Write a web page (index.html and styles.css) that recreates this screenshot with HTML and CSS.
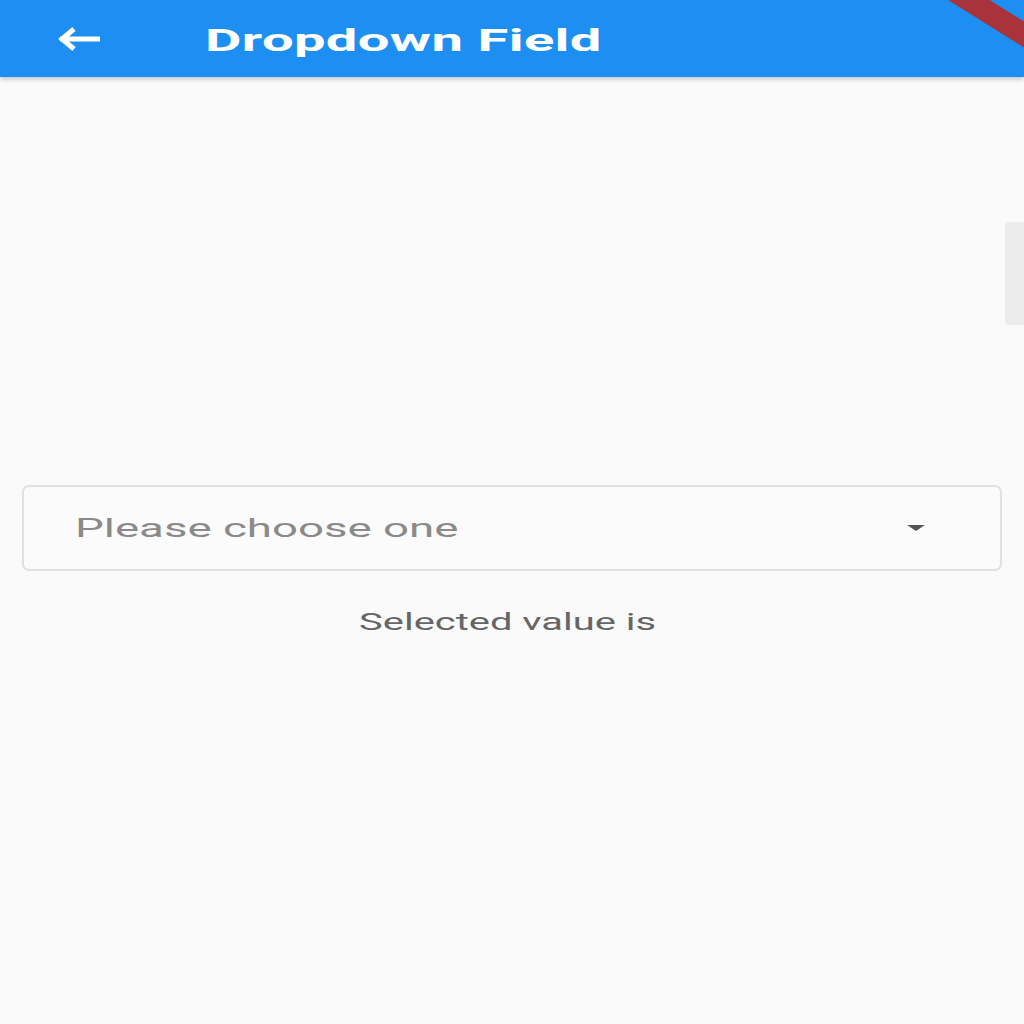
FILE: index.html
```html
<!DOCTYPE html>
<html>
<head>
<meta charset="utf-8">
<link rel="stylesheet" href="styles.css">
</head>
<body>
<div class="app">
  <header class="appbar">
    <svg class="back" viewBox="0 0 44 24" width="44" height="24">
      <path d="M2 12 H42 M16 2 L4 12 L16 22" fill="none" stroke="#fff" stroke-width="5" stroke-linejoin="miter"/>
    </svg>
    <span class="title">Dropdown Field</span>
  </header>
  <main class="content">
    <div class="dropdown">
      <span class="placeholder">Please choose one</span>
      <span class="caret"></span>
    </div>
    <div class="selected"><span class="selected-text">Selected value is</span></div>
  </main>
  <div class="scrollthumb"></div>
  <div class="banner"></div>
</div>
</body>
</html>
```
FILE: styles.css
```css
html, body {
  margin: 0;
  padding: 0;
  background: #fafafa;
}
.app {
  position: relative;
  width: 1024px;
  height: 1024px;
  overflow: hidden;
  background: #fafafa;
  font-family: Roboto, "Liberation Sans", sans-serif;
}
.appbar {
  height: 77px;
  box-sizing: border-box;
  padding-top: 4px;
  background: #1e8ff2;
  display: flex;
  align-items: center;
  box-shadow: 0 2px 5px rgba(0,0,0,0.22);
  position: relative;
  z-index: 1;
}
.back {
  margin-left: 58px;
  margin-top: -4px;
}
.title {
  margin-left: 103px;
  color: #fff;
  font-weight: 700;
  font-size: 31px;
  display: inline-block;
  transform: scaleX(1.81);
  transform-origin: left center;
  letter-spacing: 0.2px;
}
.content {
  padding-top: 408px;
  display: flex;
  flex-direction: column;
  align-items: center;
}
.dropdown {
  width: 980px;
  height: 86px;
  box-sizing: border-box;
  border: 2px solid #e0e0e0;
  border-radius: 7px;
  display: flex;
  align-items: center;
  padding-left: 51px;
  padding-right: 75px;
  background: #fbfbfb;
}
.placeholder {
  flex: 1;
  color: #8a8a8a;
  font-size: 26px;
  display: inline-block;
  transform: scaleX(1.755);
  transform-origin: left center;
}
.caret {
  width: 0;
  height: 0;
  border-left: 9px solid transparent;
  border-right: 9px solid transparent;
  border-top: 6px solid #555;
}
.selected {
  margin-top: 38px;
  width: 100%;
  box-sizing: border-box;
  padding-right: 8px;
  display: flex;
  justify-content: center;
}
.selected-text {
  color: #666;
  font-size: 23px;
  display: inline-block;
  transform: scaleX(1.735);
  transform-origin: center center;
}
.scrollthumb {
  position: absolute;
  right: 0;
  top: 222px;
  width: 19px;
  height: 103px;
  background: #ececec;
  border-radius: 3px 0 0 3px;
}
.banner {
  position: absolute;
  top: 6px;
  right: -42px;
  width: 140px;
  height: 22px;
  background: #a8333a;
  transform: rotate(32deg);
  z-index: 2;
}
```
